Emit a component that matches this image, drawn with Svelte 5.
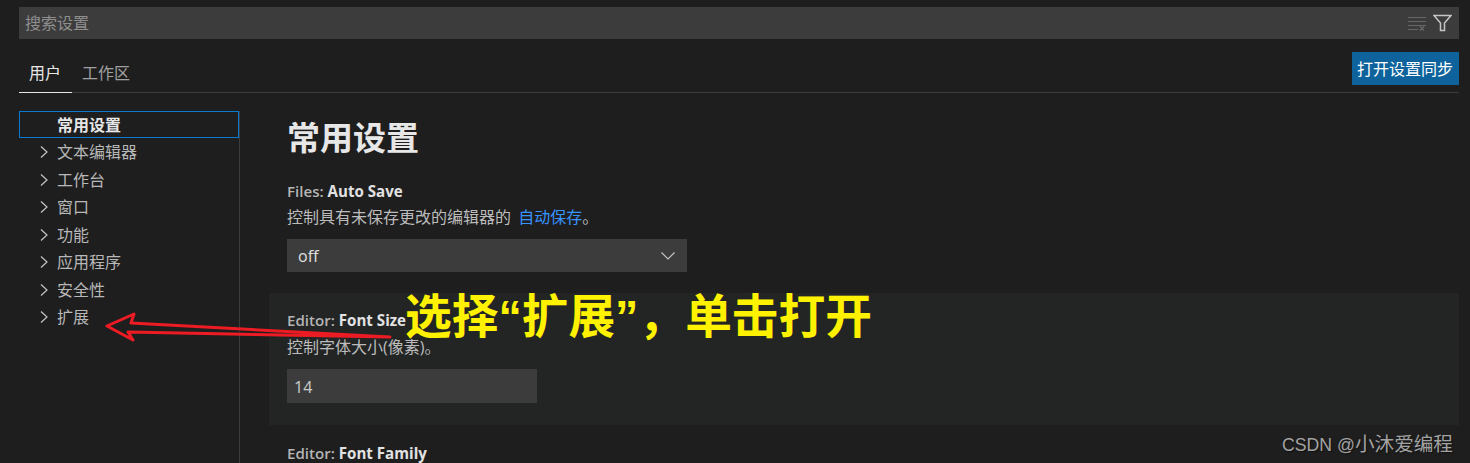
<script>
  const tree = ['文本编辑器', '工作台', '窗口', '功能', '应用程序', '安全性', '扩展'];
</script>

<div class="page">
  <div class="search">
    <span class="placeholder">搜索设置</span>
    <svg class="clear" width="18" height="16" viewBox="0 0 18 16">
      <path d="M0 2.5h18M0 6.5h18M0 10.5h18M0 14.5h10" stroke="#666666" stroke-width="1.2" fill="none" />
      <path d="M12 11.5l4 4M16 11.5l-4 4" stroke="#666666" stroke-width="1.5" fill="none" />
    </svg>
    <svg class="filter" width="19" height="18" viewBox="0 0 19 18">
      <path d="M1 1.5h17L11.5 9v7.5h-4V9z" stroke="#c5c5c5" stroke-width="1.5" fill="none" />
    </svg>
  </div>

  <div class="tabs">
    <span class="tab active">用户</span>
    <span class="tab">工作区</span>
    <button class="sync">打开设置同步</button>
  </div>

  <div class="body">
    <nav class="tree">
      <div class="row selected"><span class="label">常用设置</span></div>
      {#each tree as item}
        <div class="row">
          <svg class="chev" width="10" height="14" viewBox="0 0 10 14">
            <path d="M2 1.5l6 5.5-6 5.5" stroke="#c5c5c5" stroke-width="1.2" fill="none" />
          </svg>
          <span class="label">{item}</span>
        </div>
      {/each}
    </nav>

    <main class="content">
      <h1>常用设置</h1>

      <section class="setting">
        <div class="name first">Files: <b>Auto Save</b></div>
        <div class="desc">控制具有未保存更改的编辑器的 <a href="#auto">自动保存</a>。</div>
        <div class="select">
          <span>off</span>
          <svg width="16" height="10" viewBox="0 0 16 10">
            <path d="M1.5 1.5L8 8l6.5-6.5" stroke="#c5c5c5" stroke-width="1.2" fill="none" />
          </svg>
        </div>
      </section>

      <section class="setting focused">
        <div class="name">Editor: <b>Font Size</b></div>
        <div class="desc">控制字体大小(像素)。</div>
        <div class="input">14</div>
      </section>

      <section class="setting last">
        <div class="name">Editor: <b>Font Family</b></div>
      </section>
    </main>
  </div>

  <svg class="arrow" width="300" height="40" viewBox="100 308 300 40">
    <path d="M107 326L134 314L131 323L390 337L128 332L133 340Z" stroke="#ed1c24" stroke-width="3" stroke-linejoin="round" fill="#1e1e1e" fill-opacity="0.4" />
  </svg>
  <div class="note">选择“扩展”，单击打开</div>
  <div class="mark">CSDN @<span>小沐爱编程</span></div>
</div>

<style>
  :global(body) {
    margin: 0;
    background: #1e1e1e;
  }

  .page {
    position: relative;
    height: 463px;
    overflow: hidden;
    box-sizing: border-box;
    padding: 7px 11px 0 19px;
    background: #1e1e1e;
    color: #cccccc;
    font: 16px/22px "Open Sans", "Noto Sans CJK SC", sans-serif;
  }

  .search {
    display: flex;
    align-items: center;
    height: 32px;
    padding: 0 7px 0 6px;
    background: #3c3c3c;
  }
  .placeholder {
    flex: 1;
    color: #8f8f8f;
  }
  .clear {
    margin-right: 7px;
  }

  .tabs {
    display: flex;
    align-items: flex-start;
    height: 40px;
    margin-top: 13px;
    border-bottom: 1px solid #3c3c3c;
  }
  .tab {
    height: 41px;
    box-sizing: border-box;
    padding: 9px 10px 0;
    color: #a0a0a0;
    line-height: 24px;
  }
  .tab.active {
    color: #e7e7e7;
    width: 53px;
    border-bottom: 1px solid #e7e7e7;
  }
  .sync {
    margin-left: auto;
    width: 107px;
    height: 33px;
    padding: 0 1px 0 0;
    border: 0;
    background: #0e639c;
    color: #ffffff;
    font: inherit;
  }

  .body {
    display: flex;
    margin-top: 18px;
  }

  .tree {
    width: 220px;
    height: 352px;
    border-right: 1px solid #3c3c3c;
    flex: none;
  }
  .row {
    display: flex;
    align-items: center;
    height: 27.5px;
    padding-left: 20px;
    box-sizing: border-box;
    color: #b8b8b8;
  }
  .row .label {
    margin-left: 8px;
  }
  .row.selected {
    height: 27px;
    margin-bottom: 0.5px;
    border: 1px solid #0a7ad1;
    color: #e7e7e7;
    font-weight: 700;
    padding-left: 29px;
  }
  .chev {
    flex: none;
  }

  .content {
    flex: 1;
    padding-left: 29px;
  }
  h1 {
    margin: 7px 0 0 18px;
    height: 40px;
    font-size: 33px;
    line-height: 40px;
    font-weight: 700;
    color: #e7e7e7;
  }

  .setting {
    padding: 0 0 0 18px;
  }
  .name {
    margin-top: 26px;
    height: 22px;
    color: #b4b4b4;
    font-size: 15.1px;
    font-weight: 600;
  }
  .name.first {
    margin-top: 22px;
  }
  .name b {
    color: #e2e2e2;
    font-weight: 700;
  }
  .desc {
    margin-top: 4px;
    height: 22px;
    color: #bcbcbc;
    word-spacing: 3px;
  }
  .desc a {
    color: #3794ff;
    text-decoration: none;
  }

  .select {
    display: flex;
    align-items: center;
    justify-content: space-between;
    width: 400px;
    height: 33px;
    margin-top: 11px;
    padding: 0 11px;
    box-sizing: border-box;
    background: #3c3c3c;
    color: #e0e0e0;
  }

  .focused {
    margin-top: 21px;
    height: 132px;
    background: #232525;
  }
  .focused .name {
    margin-top: 0;
    padding-top: 16px;
  }
  .focused .desc {
    margin-top: 5px;
  }
  .input {
    width: 250px;
    height: 34px;
    margin-top: 11px;
    padding: 0 7px;
    box-sizing: border-box;
    background: #3c3c3c;
    color: #cccccc;
    line-height: 36px;
  }
  .last .name {
    margin-top: 17px;
  }

  .arrow {
    position: absolute;
    left: 100px;
    top: 308px;
  }
  .note {
    position: absolute;
    left: 405px;
    top: 288px;
    color: #fff200;
    font: 700 46.7px/58px "Liberation Sans", "Noto Sans CJK SC", sans-serif;
    white-space: nowrap;
  }
  .mark {
    position: absolute;
    left: 1282px;
    top: 433px;
    color: #a3a3a3;
    font: 17.7px/22px "Liberation Sans", "Noto Sans CJK SC", sans-serif;
    white-space: nowrap;
    text-shadow: 1px 1px 1px #111;
  }
  .mark span {
    font-size: 19.6px;
  }
</style>
